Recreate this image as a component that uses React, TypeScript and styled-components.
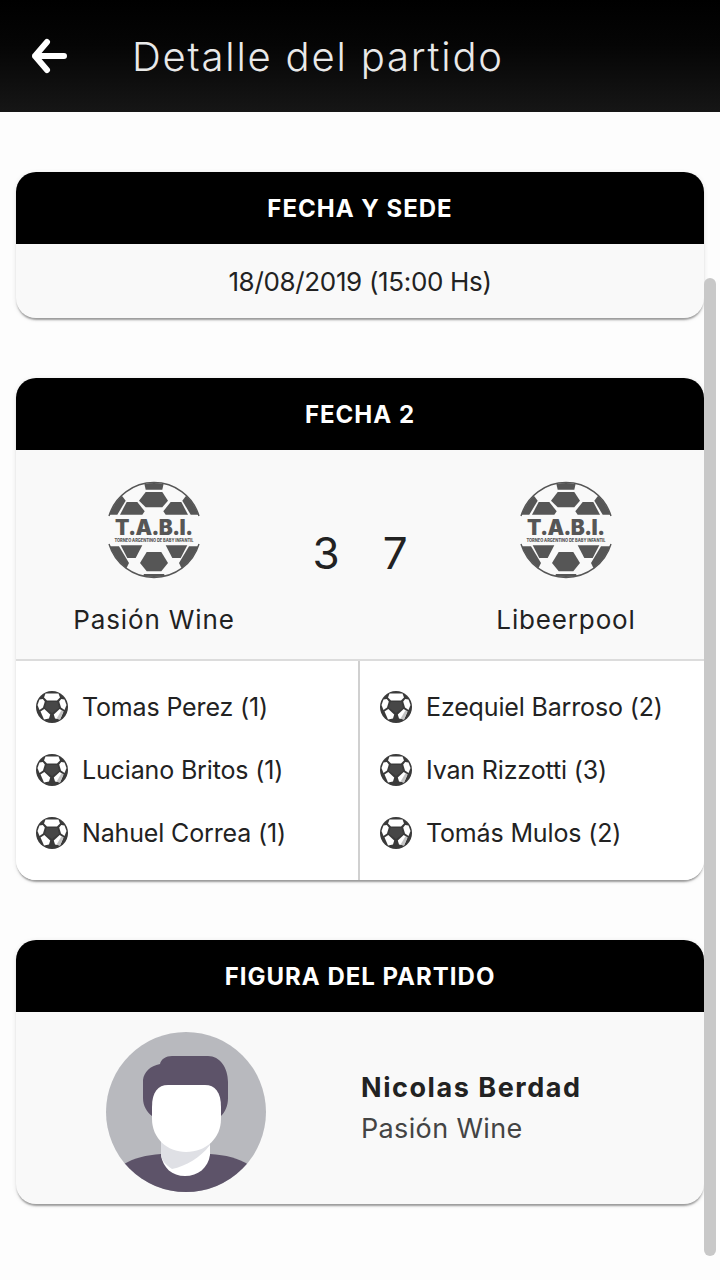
import styled, { createGlobalStyle } from "styled-components";

const GlobalStyle = createGlobalStyle`
  html, body {
    margin: 0;
    padding: 0;
    background: #fdfdfd;
    font-family: Inter, "Open Sans", sans-serif;
    color: #222;
  }
  * { box-sizing: border-box; }
`;

const Page = styled.div`
  position: relative;
  width: 720px;
  height: 1280px;
  overflow: hidden;
`;

const TopBar = styled.header`
  display: flex;
  align-items: center;
  height: 112px;
  padding-left: 30px;
  gap: 62px;
  background: linear-gradient(180deg, #000 0%, #050505 40%, #161616 100%);
`;

const BackIcon = styled.svg`
  width: 40px;
  height: 40px;
  flex: none;
`;

const Title = styled.h1`
  margin: 0;
  font-size: 40px;
  font-weight: 300;
  letter-spacing: 1.8px;
  color: #e9e9e9;
`;

const Content = styled.main`
  display: flex;
  flex-direction: column;
  gap: 60px;
  padding: 60px 16px 0;
`;

const Card = styled.section`
  border-radius: 20px;
  overflow: hidden;
  background: #f9f9f9;
  box-shadow: 0 3px 2px -1px rgba(0, 0, 0, 0.35), 0 1px 5px rgba(0, 0, 0, 0.1);
`;

const CardHeader = styled.h2`
  display: flex;
  align-items: center;
  justify-content: center;
  height: 72px;
  margin: 0;
  background: #000;
  color: #fff;
  font-size: 24px;
  font-weight: 700;
  letter-spacing: 1px;
`;

const DateRow = styled.div`
  display: flex;
  align-items: center;
  justify-content: center;
  height: 74px;
  font-size: 26px;
  letter-spacing: -0.33px;
`;

const Match = styled.div`
  display: grid;
  grid-template-columns: 276px 1fr 276px;
  height: 211px;
  border-bottom: 2px solid #dcdcdc;
`;

const Team = styled.div`
  display: flex;
  flex-direction: column;
  align-items: center;
  padding-top: 32px;
`;

const TeamName = styled.span`
  margin-top: 26px;
  font-size: 26px;
  letter-spacing: 0.85px;
`;

const Score = styled.div`
  display: flex;
  justify-content: center;
  gap: 43px;
  padding-top: 74px;
  font-size: 44px;
  line-height: 58px;
`;

const Scorers = styled.div`
  display: grid;
  grid-template-columns: 344px 1fr;
  background: #fff;
  height: 219px;
`;

const ScorerColumn = styled.ul<{ $divided?: boolean }>`
  display: flex;
  flex-direction: column;
  gap: 21px;
  margin: 0;
  padding: 25px 0 0 20px;
  list-style: none;
  border-right: ${(p) => (p.$divided ? "2px solid #d0d0d0" : "none")};
`;

const Scorer = styled.li`
  display: flex;
  align-items: center;
  gap: 14px;
  height: 42px;
  font-size: 25px;
  letter-spacing: -0.15px;
`;

const BallSvg = styled.svg`
  width: 32px;
  height: 32px;
  flex: none;
`;

const Figure = styled.div`
  display: grid;
  grid-template-columns: 340px 1fr;
  column-gap: 5px;
  height: 192px;
`;

const AvatarCell = styled.div`
  display: flex;
  justify-content: center;
  padding-top: 20px;
`;

const Avatar = styled.svg`
  width: 160px;
  height: 160px;
`;

const PlayerInfo = styled.div`
  display: flex;
  flex-direction: column;
  gap: 8px;
  padding-top: 59px;
`;

const PlayerName = styled.strong`
  font-size: 27px;
  font-weight: 700;
  letter-spacing: 1.55px;
  color: #222;
`;

const PlayerTeam = styled.span`
  font-size: 27px;
  letter-spacing: 0.35px;
  color: #444;
`;

const ScrollThumb = styled.div`
  position: absolute;
  top: 278px;
  right: 4px;
  width: 12px;
  height: 978px;
  border-radius: 6px;
  background: #c8c8c8;
`;

const LogoSvg = styled.svg`
  display: block;
  width: 130px;
  height: 120px;
  margin: -12px 0 -12px 2px;
`;

const logoPanels = [
  "52.3,5 75.7,5 72.3,19.7 55.7,19.7",
  "49,30.7 55.7,22 72.3,22 78,30.7 72.3,37.3 55.7,37.3",
  "30,44.7 36.7,32 47.3,32 54.7,41.3 52.3,44.7",
  "98,44.7 91.3,32 80.7,32 73.3,41.3 75.7,44.7",
  "14,44.7 26,24 32.3,26.3 35.7,30.7 27.3,44.7",
  "114,44.7 102,24 95.7,26.3 92.3,30.7 100.7,44.7",
  "14,76.3 29,76.3 39,93 35.7,99.7 24,98",
  "114,76.3 99,76.3 89,93 92.3,99.7 104,98",
  "30.7,75.3 52.3,75.3 45.7,88 37.3,88",
  "97.3,75.3 75.7,75.3 82.3,88 90.7,88",
  "50,93 56.7,82 71.3,82 78,93 71.3,101.3 56.7,101.3",
  "54,104 74,104 78,112 50,112",
];

const TabiLogo = ({ id }: { id: string }) => {
  const fill = "#565656";
  return (
    <LogoSvg viewBox="0 0 130 120">
      <defs>
        <clipPath id={id}>
          <circle cx="64" cy="60" r="47" />
        </clipPath>
      </defs>
      <g clipPath={`url(#${id})`}>
        {logoPanels.map((pts) => (
          <polygon key={pts} points={pts} fill={fill} />
        ))}
      </g>
      <path d="M19 46 A47 47 0 0 1 109 46" fill="none" stroke={fill} strokeWidth="1.4" />
      <path d="M19 74 A47 47 0 0 0 109 74" fill="none" stroke={fill} strokeWidth="1.4" />
      <text
        x="64"
        y="65"
        textAnchor="middle"
        textLength="78"
        lengthAdjust="spacing"
        fontFamily="Inter, sans-serif"
        fontSize="21"
        fontWeight="900"
        fill={fill}
      >
        T.A.B.I.
      </text>
      <text
        x="64"
        y="71.5"
        textAnchor="middle"
        textLength="79"
        lengthAdjust="spacingAndGlyphs"
        fontFamily="Inter, sans-serif"
        fontSize="4.4"
        fontWeight="800"
        fill={fill}
      >
        TORNEO ARGENTINO DE BABY INFANTIL
      </text>
    </LogoSvg>
  );
};

const BallIcon = ({ id }: { id: string }) => (
  <BallSvg viewBox="0 0 32 32">
    <defs>
      <clipPath id={id}>
        <circle cx="16" cy="16" r="16" />
      </clipPath>
    </defs>
    <circle cx="16" cy="16" r="16" fill="#3a3a3a" />
    <g clipPath={`url(#${id})`} fill="#fff">
      <polygon points="9.5,2.5 22.5,2.5 24,6.5 21,9.5 11,9.5 8,6.5" />
      <polygon points="3.5,8.5 6.8,8 8.8,10.5 7,16.5 3.5,19 1.5,14" />
      <polygon points="28.5,8.5 25.2,8 23.2,10.5 25,16.5 28.5,19 30.5,14" />
      <polygon points="4.5,20.5 8.3,18 14.2,23.5 13,27.5 8,28.5" />
      <polygon points="27.5,20.5 23.7,18 17.8,23.5 19,27.5 24,28.5" />
      <polygon points="27.5,20.5 25.5,19.2 20.5,27.7 24,28.5" fill="#c4c4c4" />
      <polygon points="10.5,11 21.5,11 23,17 16,22 9,17" fill="#474747" />
    </g>
  </BallSvg>
);

const AvatarImage = () => (
  <Avatar viewBox="0 0 160 160">
    <defs>
      <clipPath id="avatarClip">
        <circle cx="80" cy="80" r="80" />
      </clipPath>
    </defs>
    <g clipPath="url(#avatarClip)">
      <rect width="160" height="160" fill="#b8b9be" />
      <path
        d="M37 48 C38 40 44 34 54 32 C55 27 60 24 66 24 H102 C114 24 122 36 122 50 V66 C122 74 119 80 115 84 H46 C41 80 37 74 37 66 Z"
        fill="#5d5369"
      />
      <path
        d="M18 132 C28 126 40 123 55 122 H104 C120 123 132 126 143 133 L160 160 H0 Z"
        fill="#5d5369"
      />
      <path d="M55 108 H104 V123 C102 136 92 144 79 144 C66 144 57 136 55 123 Z" fill="#fff" />
      <path d="M55 108 H104 V113 C94 126 80 134 66 137 C59 132 55 128 55 122 Z" fill="#dfe0e5" />
      <path
        d="M46 75 C46 60 52 53 62 53 H99 C109 53 115 60 115 75 V87 C115 106 100 120 80 120 C61 120 46 106 46 87 Z"
        fill="#fff"
      />
    </g>
  </Avatar>
);

const leftScorers = ["Tomas Perez (1)", "Luciano Britos (1)", "Nahuel Correa (1)"];
const rightScorers = ["Ezequiel Barroso (2)", "Ivan Rizzotti (3)", "Tomás Mulos (2)"];

export default function App() {
  return (
    <Page>
      <GlobalStyle />
      <TopBar>
        <BackIcon viewBox="0 0 40 40" fill="none">
          <path
            d="M5 20 H34 M17 6 L5 20 L17 34"
            stroke="#fff"
            strokeWidth="6"
            strokeLinecap="round"
            strokeLinejoin="round"
          />
        </BackIcon>
        <Title>Detalle del partido</Title>
      </TopBar>
      <Content>
        <Card>
          <CardHeader>FECHA Y SEDE</CardHeader>
          <DateRow>18/08/2019 (15:00 Hs)</DateRow>
        </Card>
        <Card>
          <CardHeader>FECHA 2</CardHeader>
          <Match>
            <Team>
              <TabiLogo id="logoA" />
              <TeamName>Pasión Wine</TeamName>
            </Team>
            <Score>
              <span>3</span>
              <span>7</span>
            </Score>
            <Team>
              <TabiLogo id="logoB" />
              <TeamName>Libeerpool</TeamName>
            </Team>
          </Match>
          <Scorers>
            <ScorerColumn $divided>
              {leftScorers.map((name, i) => (
                <Scorer key={name}>
                  <BallIcon id={`ballL${i}`} />
                  {name}
                </Scorer>
              ))}
            </ScorerColumn>
            <ScorerColumn>
              {rightScorers.map((name, i) => (
                <Scorer key={name}>
                  <BallIcon id={`ballR${i}`} />
                  {name}
                </Scorer>
              ))}
            </ScorerColumn>
          </Scorers>
        </Card>
        <Card>
          <CardHeader>FIGURA DEL PARTIDO</CardHeader>
          <Figure>
            <AvatarCell>
              <AvatarImage />
            </AvatarCell>
            <PlayerInfo>
              <PlayerName>Nicolas Berdad</PlayerName>
              <PlayerTeam>Pasión Wine</PlayerTeam>
            </PlayerInfo>
          </Figure>
        </Card>
      </Content>
      <ScrollThumb />
    </Page>
  );
}
